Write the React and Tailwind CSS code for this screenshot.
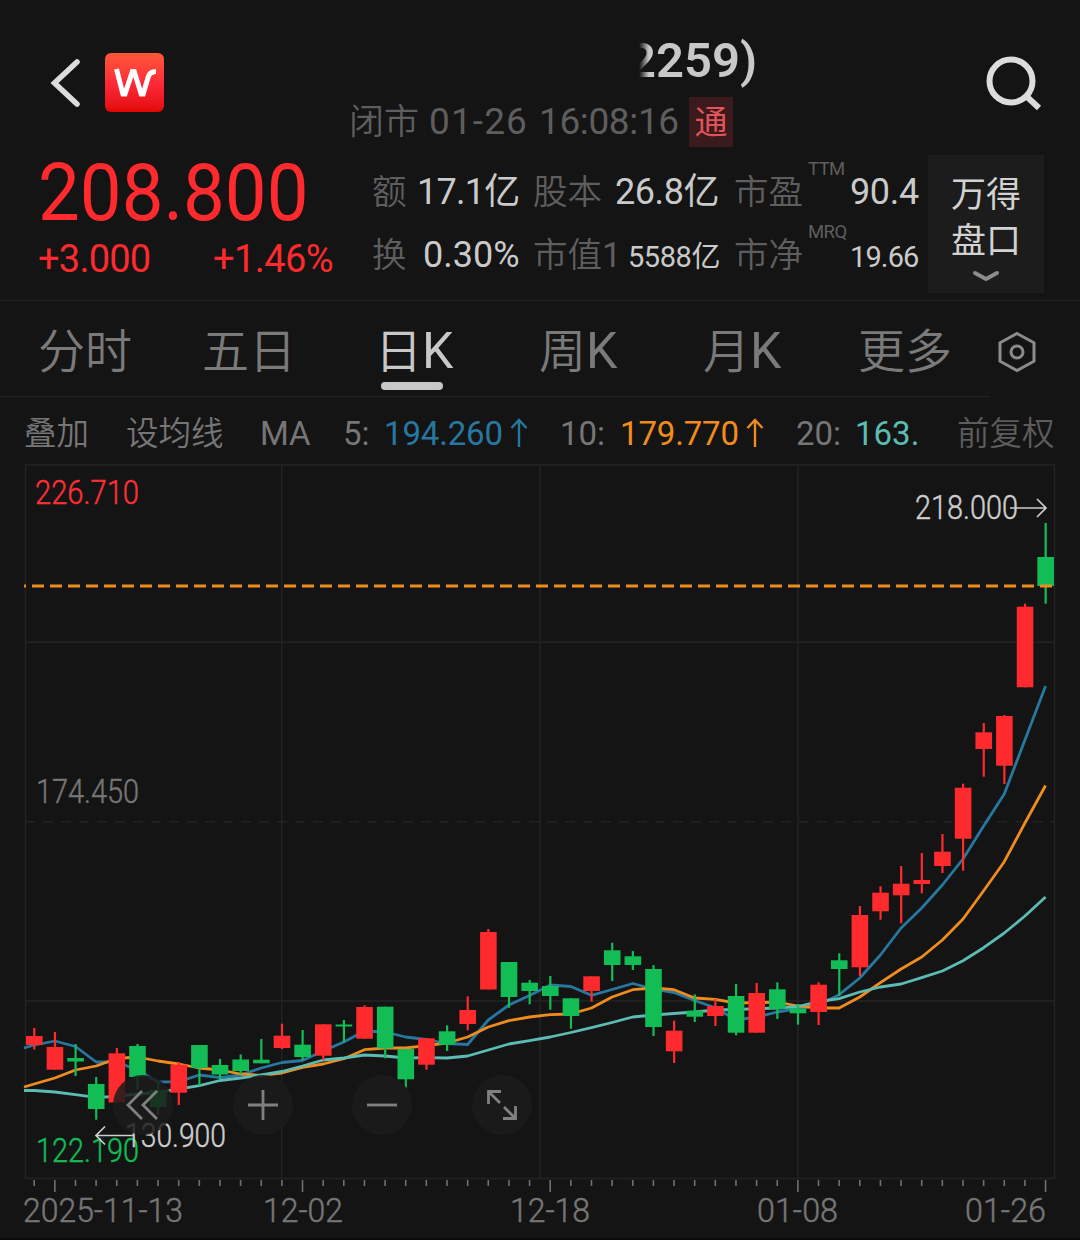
const UP = '#ff2a2d';
const DOWN = '#12bd55';

const FIRST_X = 34.2;
const STEP = 20.64;

// [direction, high, body top, body bottom, low]
const CANDLES = [
  ['u', 1028, 1036, 1045, 1049.5],
  ['u', 1032, 1047, 1069.7, 1069.7],
  ['d', 1044, 1058, 1061.5, 1076],
  ['d', 1077, 1084, 1109, 1119.7],
  ['u', 1048, 1053.3, 1102.5, 1102.5],
  ['d', 1044, 1046, 1077, 1090],
  ['d', 1081, 1090, 1107, 1115],
  ['u', 1062, 1064.7, 1092.7, 1105],
  ['d', 1045, 1045, 1068, 1085.7],
  ['d', 1059, 1065, 1074.5, 1079],
  ['d', 1054.5, 1059.5, 1071, 1074.5],
  ['d', 1039, 1059.7, 1063.3, 1063.3],
  ['u', 1023.7, 1035.7, 1048, 1049],
  ['d', 1030, 1044.7, 1057, 1060],
  ['u', 1024.3, 1024.3, 1055.7, 1060],
  ['d', 1020, 1024.5, 1026.5, 1042],
  ['u', 1005.3, 1007, 1038.7, 1038.7],
  ['d', 1006.7, 1006.7, 1048.3, 1058.3],
  ['d', 1049, 1049, 1079.3, 1087.7],
  ['u', 1038.3, 1038.3, 1064.7, 1069.7],
  ['d', 1025.3, 1031.3, 1044.7, 1051],
  ['u', 996.3, 1010, 1024, 1030.3],
  ['u', 929, 932, 989.5, 989.5],
  ['d', 962, 962, 997, 1007.7],
  ['d', 980, 982.7, 991, 1004.3],
  ['d', 976, 986, 996, 1009.7],
  ['d', 998.3, 998.3, 1016, 1028.7],
  ['u', 976.3, 976.3, 991, 1001.7],
  ['d', 942.7, 950.3, 965, 981],
  ['d', 951, 956.3, 965, 970],
  ['d', 965, 969, 1027, 1036],
  ['u', 1020.7, 1030.7, 1051.3, 1063],
  ['d', 994.3, 1010.7, 1016.7, 1022],
  ['u', 999, 1006, 1016, 1026],
  ['d', 984, 996, 1032.7, 1035.3],
  ['u', 983, 993, 1032.7, 1032.7],
  ['d', 982.3, 989.3, 1009, 1019],
  ['d', 1004, 1008.7, 1013.3, 1024.7],
  ['u', 982.3, 984.7, 1012, 1025],
  ['d', 953.3, 960.3, 969, 996],
  ['u', 906, 915, 967.3, 976],
  ['u', 886.3, 892.7, 911.3, 919.7],
  ['u', 866, 883.7, 895.3, 923.3],
  ['u', 853, 880, 884, 893.3],
  ['u', 834, 851.7, 866, 873],
  ['u', 783.7, 787.7, 838.7, 870.7],
  ['u', 723, 732.3, 749, 776.7],
  ['u', 715, 716, 765.7, 784],
  ['u', 603.7, 606.7, 687.3, 687.3],
  ['d', 523, 557, 586, 603.7],
];

// first value sits on the left edge of the plot, the rest on the candles
const AVERAGES = [
  {
    color: '#2778a0',
    values: [
      1048, 1045, 1041, 1046.5, 1062, 1062, 1070, 1082, 1081.7, 1075, 1077.7, 1075, 1068, 1062.5,
      1060.5, 1051, 1042, 1031, 1032, 1037, 1039.5, 1043.5, 1044.5, 1020, 1005, 995.5, 985, 986.5,
      995.3, 989.5, 983.5, 989, 992.5, 1000.5, 1007.7, 1020, 1017, 1012, 1008.5, 1005, 994.7, 978,
      955, 928, 908, 885, 859, 826, 794, 740, 686,
    ],
  },
  {
    color: '#f08c1e',
    values: [
      1087, 1084, 1078, 1070, 1066, 1058.5, 1057, 1061, 1064, 1068, 1070, 1074, 1075.3, 1073,
      1067.3, 1064, 1058.7, 1049.7, 1048, 1048, 1045.7, 1043, 1037, 1027, 1020.7, 1017, 1014.7,
      1014, 1008, 997, 989.7, 988, 989.7, 998, 999.3, 1003, 1002.7, 1002, 1006, 1008, 1008, 997,
      982.7, 969, 957, 940, 919, 890.7, 861.7, 823, 785.5,
    ],
  },
  {
    color: '#5cbcb4',
    values: [
      1090.5, 1090.5, 1092, 1094.7, 1097.3, 1096.5, 1094, 1092.5, 1089, 1085.7, 1080.5, 1078, 1075,
      1071.5, 1066, 1060, 1058, 1055, 1056, 1058, 1057.7, 1058, 1056, 1050, 1044, 1040.7, 1037,
      1032.5, 1027.7, 1022.5, 1017, 1015, 1013.5, 1012, 1010, 1009.5, 1008.7, 1008, 1006.5, 1001.5,
      998.7, 992, 987, 984, 977.7, 971, 960.7, 947.7, 933, 916, 897,
    ],
  },
];

const DATES = [
  { text: '2025-11-13', x: 23, width: 160 },
  { text: '12-02', x: 263, width: 80 },
  { text: '12-18', x: 510, width: 80 },
  { text: '01-08', x: 757, width: 81 },
  { text: '01-26', x: 965, width: 81 },
];

const candleX = (index) => FIRST_X + STEP * index;

function toPoints(values) {
  return values.map((y, i) => `${i === 0 ? 24 : candleX(i - 1)},${y}`).join(' ');
}

// light face with a hairline stroke, between the light and regular weights
function Label({ x, y, width, fill, children }) {
  return (
    <text
      x={x}
      y={y}
      fill={fill}
      stroke={fill}
      strokeWidth="0.45"
      fontSize="32.5"
      fontWeight="300"
      textLength={width}
      lengthAdjust="spacingAndGlyphs"
    >
      {children}
    </text>
  );
}

function Header() {
  return (
    <header className="flex h-[150px] items-start pl-[50px]">
      <svg className="mt-[58px] h-[50px] w-[31px]" viewBox="0 0 31 50" fill="none" stroke="#dcdcdc" strokeWidth="5.5">
        <path d="M27 4 4.5 25 27 46" strokeLinecap="round" strokeLinejoin="miter" />
      </svg>
      <div className="mt-[53px] ml-6 h-[59px] w-[59px] rounded-[6px] bg-linear-to-b from-[#ff5639] via-[#ff2a38] to-[#e20604]">
        <svg viewBox="0 0 59 59" fill="none" stroke="#fff" strokeWidth="5">
          <path d="M11.5 16 17.9 40.9H20L27.4 18.6H29.2L36.2 40.9H38.2L43.2 24Q44.8 18.6 51 18.6" strokeLinejoin="miter" />
        </svg>
      </div>
      <div className="ml-[185px] w-[500px] pt-[36px]">
        <div className="relative pl-[279px] text-[49px] leading-none font-semibold text-[#c8c8c8]">
          2259)
          <div className="absolute top-0 left-[272px] h-12 w-[28px] bg-linear-to-r from-[#141414] from-65% to-transparent" />
        </div>
        <div className="mt-[12px] flex items-start text-[#5e5e5e]">
          <div className="flex h-[50px] w-[340px] items-baseline pt-[6px] leading-none whitespace-nowrap">
            <span className="w-[80px] text-[35px] font-[350]">闭市</span>
            <span className="w-[110px] text-[37px] tracking-[0.03em]">01-26</span>
            <span className="text-[37px] tracking-[-0.01em]">16:08:16</span>
          </div>
          <span className="flex h-[50px] w-[44px] items-center justify-center bg-[#3a1a1c] text-[33px] leading-none text-[#e2545a]">
            通
          </span>
        </div>
      </div>
      <svg className="mt-[54px] ml-[136px] h-[58px] w-[58px]" viewBox="0 0 58 58" fill="none" stroke="#dcdcdc" strokeWidth="6">
        <circle cx="26" cy="27" r="21.5" />
        <path d="M40 41 54 54" />
      </svg>
    </header>
  );
}

function Quote() {
  return (
    <section className="flex h-[150px] items-start pl-[38px]">
      <div className="w-[334px] text-[#ff2a2d]">
        <div className="mt-[3px] origin-left scale-x-[0.93] text-[80px] leading-none whitespace-nowrap">208.800</div>
        <div className="mt-[7px] flex text-[38px] leading-none">
          <span className="w-[175px] tracking-[-0.02em]">+3.000</span>
          <span className="tracking-[-0.015em]">+1.46%</span>
        </div>
      </div>
      <div className="w-[556px] pt-[24px] leading-none font-[350] whitespace-nowrap text-[#5e5e5e]">
        <div className="flex h-[63px] items-baseline text-[34.5px]">
          <span className="w-[45px]">额</span>
          <span className="w-[116px] text-[36px] font-normal tracking-[-0.02em] text-[#cacaca]">17.1亿</span>
          <span className="w-[82px]">股本</span>
          <span className="w-[119px] text-[36px] font-normal tracking-[-0.012em] text-[#cacaca]">26.8亿</span>
          <span className="w-[74px]">市盈</span>
          <span className="-mt-[14px] w-[42px] self-start text-[18.5px] font-normal tracking-[-0.03em]">TTM</span>
          <span className="text-[36px] font-normal tracking-[-0.01em] text-[#cacaca]">90.4</span>
        </div>
        <div className="flex h-[63px] items-baseline text-[34.5px]">
          <span className="w-[51px]">换</span>
          <span className="w-[110px] text-[36px] font-normal text-[#cacaca]">0.30%</span>
          <span className="w-[95px]">市值<span className="font-normal">1</span></span>
          <span className="w-[106px] text-[29px] font-normal tracking-[-0.015em] text-[#cacaca]">5588亿</span>
          <span className="w-[74px]">市净</span>
          <span className="-mt-[14px] w-[42px] self-start text-[18.5px] font-normal tracking-[-0.03em]">MRQ</span>
          <span className="text-[29px] font-normal tracking-[-0.03em] text-[#cacaca]">19.66</span>
        </div>
      </div>
      <button className="mt-[5px] flex h-[138px] w-[116px] flex-col items-center bg-[#1c1c1c] pt-[18px] text-[35px] leading-[46px] text-[#d2d2d2]">
        <span>万得</span>
        <span>盘口</span>
        <svg className="mt-[4px] h-[14px] w-[28px]" viewBox="0 0 28 14" fill="none" stroke="#8c8c8c" strokeWidth="4">
          <path d="M3 4 14 10 25 4" strokeLinecap="round" strokeLinejoin="round" />
        </svg>
      </button>
    </section>
  );
}

function Tabs() {
  return (
    <nav className="relative flex h-[98px] items-baseline border-t border-[#222] pt-[25px] pl-[38px] text-[47px] leading-none font-[350] whitespace-nowrap text-[#7a7a7a]">
      <span className="w-[164px] shrink-0">分时</span>
      <span className="w-[173px] shrink-0">五日</span>
      <span className="flex h-[64px] w-[164px] shrink-0 flex-col text-[#c8c8c8]">
        <span>日<span className="text-[50px] font-normal">K</span></span>
        <span className="mt-[6px] ml-[6px] h-[8px] w-[62px] shrink-0 rounded-full bg-[#c8c8c8]" />
      </span>
      <span className="w-[164px] shrink-0">周<span className="text-[50px] font-normal">K</span></span>
      <span className="w-[155px] shrink-0">月<span className="text-[50px] font-normal">K</span></span>
      <span className="w-[139px] shrink-0">更多</span>
      <svg className="mt-[5px] h-[42px] w-[40px] shrink-0 self-start" viewBox="0 0 40 42" fill="none" stroke="#8c8c8c" strokeWidth="3">
        <path d="M20 2.5 37 11.8V30.2L20 39.5 3 30.2V11.8Z" />
        <circle cx="20" cy="21" r="6" />
      </svg>
      <div className="absolute bottom-px left-0 h-px w-[990px] bg-[#232323]" />
    </nav>
  );
}

function UpArrow() {
  return (
    <svg className="h-[29px] w-[18px] translate-y-[2px]" viewBox="0 0 18 29" fill="none" stroke="currentColor" strokeWidth="2.4">
      <path d="M9 29V2M1.5 10 9 2 16.5 10" />
    </svg>
  );
}

function Averages() {
  return (
    <div className="flex h-[66px] items-baseline pt-[18px] pl-[24px] text-[33px] leading-none whitespace-nowrap text-[#767676]">
      <span className="w-[102px] text-[32.5px] font-[350]">叠加</span>
      <span className="w-[134px] text-[32.5px] font-[350]">设均线</span>
      <span className="w-[83px]">MA</span>
      <span className="w-[41px]">5:</span>
      <span className="w-[126px] tracking-[-0.005em] text-[#2778a0]">194.260</span>
      <span className="w-[50px] text-[#2778a0]"><UpArrow /></span>
      <span className="w-[60px]">10:</span>
      <span className="w-[126px] tracking-[-0.005em] text-[#f08c1e]">179.770</span>
      <span className="w-[50px] text-[#f08c1e]"><UpArrow /></span>
      <span className="w-[59px]">20:</span>
      <span className="w-[102px] text-[#5cbcb4]">163.</span>
      <span className="text-[32.5px] font-[350] text-[#5c5c5c]">前复权</span>
    </div>
  );
}

function RoundButton({ children }) {
  return (
    <button className="flex h-[60px] w-[60px] items-center justify-center rounded-full bg-[#1b1b1b]/85">
      <svg className="h-[40px] w-[40px]" viewBox="-20 -20 40 40" fill="none" stroke="#808080" strokeWidth="2.8">
        {children}
      </svg>
    </button>
  );
}

function Chart() {
  return (
    <section className="relative h-[776px]">
      <svg className="block h-[776px] w-[1080px]" viewBox="0 464 1080 776" fill="none">
        <g stroke="#232323" strokeWidth="1.5">
          <path d="M25.5 465H1054.5V1178.5H25.5ZM281.7 465V1178M540 465V1178M798 465V1178M25 642.3H1054M25 1001H1054" />
          <path d="M25 821.7H1054" strokeDasharray="10 8" />
        </g>
        <g stroke="#707070" strokeWidth="1.6">
          {CANDLES.map((_, i) => (
            <path key={i} d={`M${candleX(i)} 1180V${i % 12 === 1 ? 1192 : 1186}`} />
          ))}
        </g>

        {AVERAGES.map((line) => (
          <polyline key={line.color} points={toPoints(line.values)} stroke={line.color} strokeWidth="2.8" strokeLinejoin="round" />
        ))}

        {CANDLES.map(([dir, high, top, bottom, low], i) => {
          const color = dir === 'u' ? UP : DOWN;
          return (
            <g key={i} fill={color}>
              <rect x={candleX(i) - 1} y={high} width="2.2" height={low - high} />
              <rect x={candleX(i) - 8.2} y={top} width="16.6" height={bottom - top} />
            </g>
          );
        })}

        <path d="M24 586H1054" stroke="#f08c1e" strokeWidth="2.8" strokeDasharray="12 6" strokeDashoffset="10" />

        <Label x={35} y={504} width={104} fill="#ff2f35">226.710</Label>
        <Label x={36} y={803} width={103} fill="#767676">174.450</Label>
        <Label x={36} y={1161.5} width={103} fill={DOWN}>122.190</Label>
        <Label x={915} y={519} width={103} fill="#cdcdcd">218.000</Label>
        <Label x={125} y={1147} width={101} fill="#cdcdcd">130.900</Label>
        <g stroke="#cdcdcd" strokeWidth="1.7">
          <path d="M1010 508H1046M1037 499 1046 508 1037 517" />
          <path d="M134 1135.5H96M105 1126.5 96 1135.5 105 1144.5" />
        </g>
        {DATES.map((d) => (
          <Label key={d.text} x={d.x} y={1221.5} width={d.width} fill="#767676">{d.text}</Label>
        ))}
        <path d="M0 1239H1080" stroke="#0b0b0b" strokeWidth="2" />
      </svg>

      <div className="absolute top-[611px] left-[113px] flex gap-[59.5px]">
        <RoundButton>
          <path d="M-1-14-15 0-1 14M14-14 0 0 14 14" />
        </RoundButton>
        <RoundButton>
          <path d="M-15 0H15M0-15V15" />
        </RoundButton>
        <RoundButton>
          <path d="M-15 0H15" />
        </RoundButton>
        <RoundButton>
          <path d="M-13.5-1V-13.5H-1M-13-13-2-2M13.5 1V13.5H1M13 13 2 2" />
        </RoundButton>
      </div>
    </section>
  );
}

export default function App() {
  return (
    <main className="h-[1240px] w-[1080px] overflow-hidden bg-[#141414] font-[Roboto,'Noto_Sans_CJK_SC',sans-serif]">
      <Header />
      <Quote />
      <Tabs />
      <Averages />
      <Chart />
    </main>
  );
}
